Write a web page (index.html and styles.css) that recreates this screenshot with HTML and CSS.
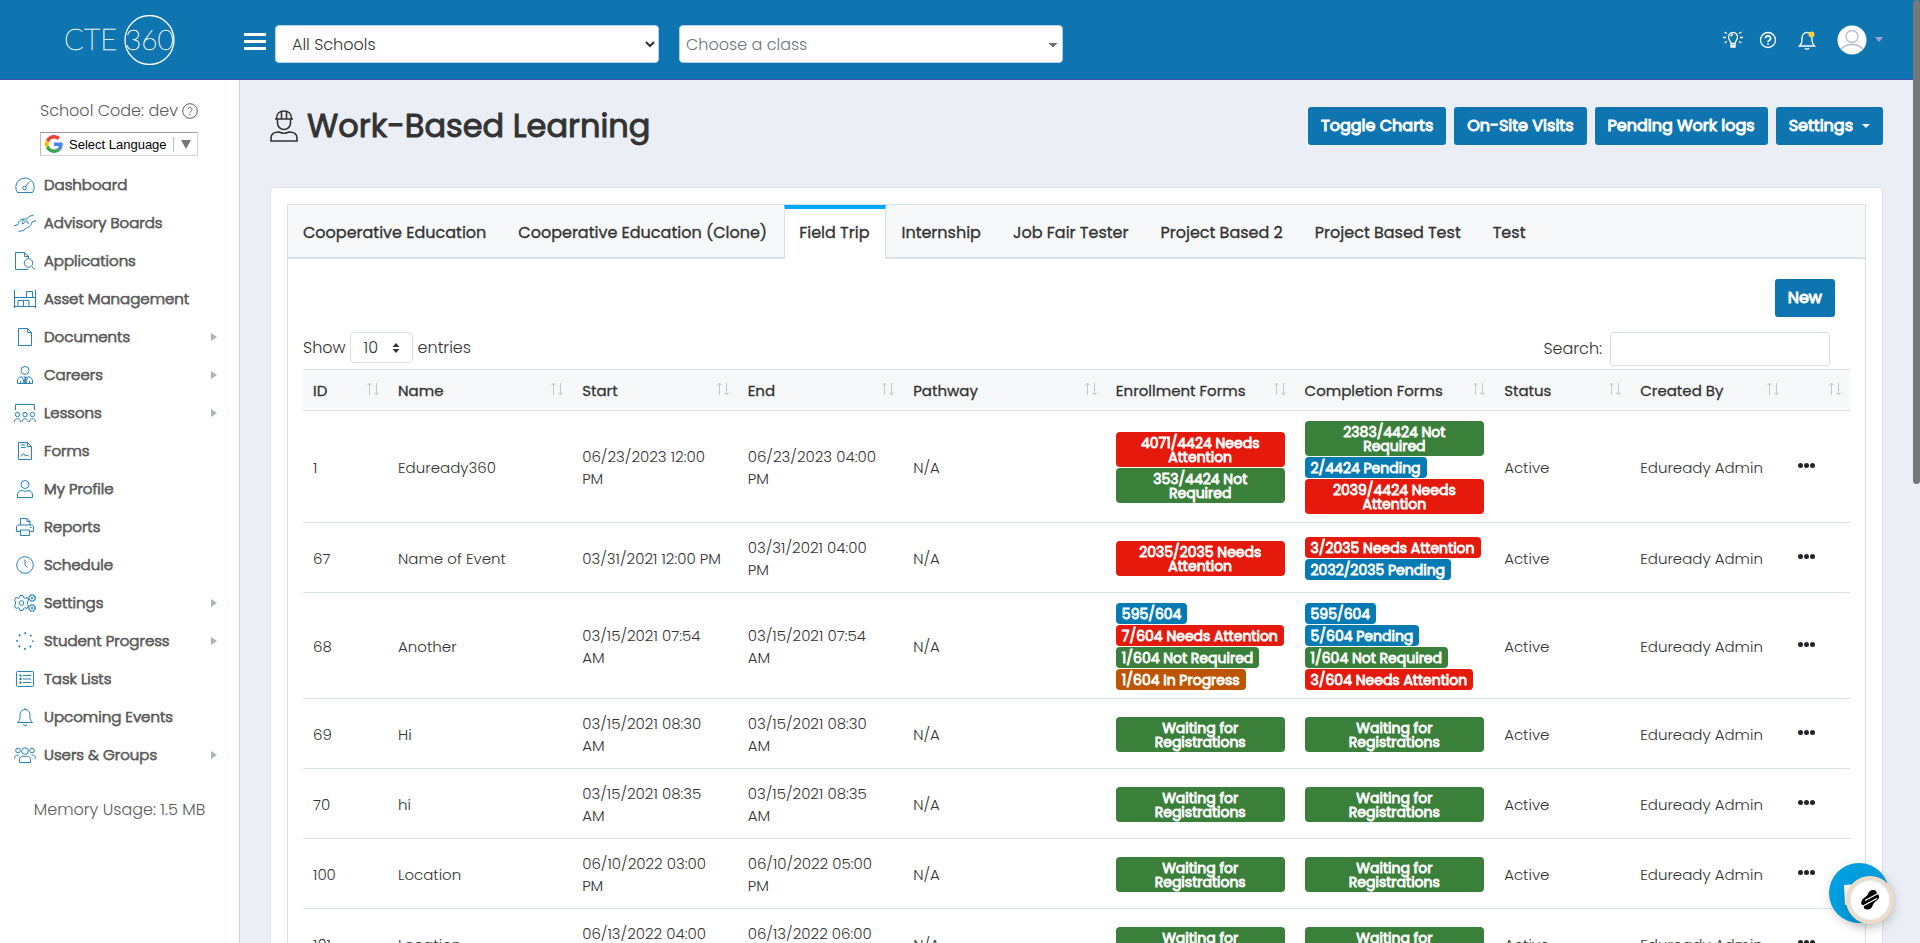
FILE: index.html
```html
<!DOCTYPE html>
<html lang="en">
<head>
    <meta charset="UTF-8">
    <title>Work-Based Learning</title>
    <link rel="stylesheet" href="styles.css">
</head>
<body>

<svg class="defs" width="0" height="0">
    <symbol id="sort" viewBox="0 0 14 14"><path d="M3.5 13V1M1.5 3.5l2-2.5 2 2.5M10.500 1v12M8.500 10.500l2 2.500 2-2.500"/></symbol>
</svg>

<header class="topbar">
    <a href="#" class="brand" aria-label="CTE 360">
        <svg width="112" height="50" viewBox="0 0 112 50">
            <text x="0" y="35" class="brand-text" font-size="29">CTE</text>
            <text x="61" y="35" class="brand-text" font-size="28">360</text>
            <circle cx="85.500" cy="25" r="24.500" fill="none" stroke="#fff" stroke-width="1.3"/>
        </svg>
    </a>
    <button class="hamburger" aria-label="Menu"><span></span><span></span><span></span></button>
    <select class="school-select" aria-label="School"><option>All Schools</option></select>
    <select class="class-select" aria-label="Class"><option>Choose a class</option></select>
    <div class="top-icons">
        <button class="icon-btn" aria-label="Tips">
            <svg width="20" height="18" viewBox="0 0 20 18"><path d="M8 12.500c0-2-2.500-3-2.500-6.500a4.500 4.500 0 0 1 9 0c0 3.500-2.500 4.500-2.500 6.500zM8 12.500V16h4v-3.500M8 14.500h4M8 5.500a2 2 0 0 1 2-2M0 6.500h3M17 6.500h3M1.500 1l2.500 1.500M18.500 1L16 2.500M1.500 12L4 10.500M18.500 12L16 10.500"/></svg>
        </button>
        <button class="icon-btn" aria-label="Help">
            <svg width="18" height="18" viewBox="0 0 18 18"><circle cx="9" cy="9" r="7.500"/><path d="M6.500 7.300a2.500 2.500 0 1 1 3.700 2.200c-.9.500-1.200.8-1.200 1.700M9 12.500v1.200" stroke-width="1.800"/></svg>
        </button>
        <button class="icon-btn bell" aria-label="Notifications">
            <svg width="18" height="20" viewBox="0 0 18 20"><path d="M1.500 16h15c-1.500-1.500-2.500-3-2.500-5.500V8c0-3-2-5.500-5-5.500S4 5 4 8v2.500C4 13 3 14.500 1.500 16zM7 18.200c.8 1.300 3.200 1.300 4 0"/><circle cx="13.500" cy="4.500" r="3" fill="#ffcf3f" stroke="none"/></svg>
        </button>
        <button class="icon-btn avatar" aria-label="Account">
            <svg width="30" height="30" viewBox="0 0 30 30"><circle cx="15" cy="15" r="14.500" fill="#fff" stroke="none"/><circle cx="15" cy="11.500" r="6" stroke="#b5bcc2"/><path d="M4 24c5-6 17-6 22 0" stroke="#b5bcc2"/></svg>
            <span class="caret"></span>
        </button>
    </div>
</header>

<div class="page">
    <aside class="sidebar">
        <div class="school-code">School Code: dev
            <svg width="16" height="16" viewBox="0 0 16 16"><circle cx="8" cy="8" r="7.300"/><path d="M6 6.300a2 2 0 1 1 3 1.900c-.7.400-1 .700-1 1.500M8 11v1.200"/></svg>
        </div>
        <button class="language">
            <svg width="18" height="18" viewBox="0 0 48 48"><path fill="#ea4335" d="M24 9.500c3.500 0 6.700 1.200 9.200 3.600l6.900-6.900C35.900 2.400 30.500 0 24 0 14.600 0 6.500 5.400 2.600 13.200l8 6.200C12.400 13.700 17.700 9.500 24 9.500z"/><path fill="#4285f4" d="M47 24.600c0-1.600-.2-3.100-.4-4.600H24v9h12.900c-.6 3-2.200 5.500-4.700 7.200l7.700 6C44.400 38 47 31.800 47 24.600z"/><path fill="#fbbc05" d="M10.500 28.600a14.500 14.500 0 0 1 0-9.200l-8-6.200a24 24 0 0 0 0 21.600z"/><path fill="#34a853" d="M24 48c6.500 0 11.900-2.100 15.900-5.800l-7.700-6c-2.200 1.500-4.900 2.300-8.200 2.300-6.300 0-11.600-4.200-13.500-9.900l-8 6.200C6.500 42.600 14.600 48 24 48z"/></svg>
            <span class="language-text">Select Language</span>
            <span class="language-caret"></span>
        </button>

        <nav class="menu">
            <a href="#"><svg viewBox="0 0 22 18"><path d="M3.500 16.500a9.200 9.200 0 1 1 15 0zM15.500 5.500l-4 5.200"/><circle cx="10.500" cy="12" r="1.800"/></svg>Dashboard</a>
            <a href="#"><svg viewBox="0 0 22 18"><path d="M0 12l4-1.500c1-4 3-5.500 5.500-5.500M22 6.500l-4 1.500c-1 4-3 5.500-5.500 6L9 16.500l-4.500 1M9.500 5h3.500l2-2.500 4.500-1.500M9.500 5L8 9.500c1.500.5 2.800-.5 3.200-2.500 2-.2 3.300 1 3 3"/></svg>Advisory Boards</a>
            <a href="#"><svg viewBox="0 0 22 18"><path d="M14 17.500H1.500V.5h9l4 4v2M10.500.5v4h4M18 15l3 2.500"/><circle cx="14.500" cy="11" r="4.300"/></svg>Applications</a>
            <a href="#"><svg viewBox="0 0 22 18"><path d="M.5 0v18M21.500 0v18M.5 7.500h21M.5 16.500h21M12.500 7.500v-6h6v6M4 16v-5.500h11V16M9.500 10.500V16"/></svg>Asset Management</a>
            <a href="#"><svg viewBox="0 0 22 18"><path d="M4.500.5h9l4 4v13h-13zM13.500.5v4h4"/></svg>Documents<span class="arrow"></span></a>
            <a href="#"><svg viewBox="0 0 22 18"><circle cx="11" cy="4.500" r="4"/><path d="M3.500 17.500V15c0-2 1.500-3.500 4-4.500l3.500 6.500 3.500-6.500c2.500 1 4 2.500 4 4.500v2.500zM9.500 11h3l-1 3 1 3M11.500 11l-2 6M6.500 15v2.500M15.500 15v2.500"/></svg>Careers<span class="arrow"></span></a>
            <a href="#"><svg viewBox="0 0 22 18"><path d="M1.500 6V.5h19V6M.5 18c0-4.500 6-4.500 6 0M8 18c0-4.500 6-4.500 6 0M15.500 18c0-4.500 6-4.500 6 0"/><circle cx="3.500" cy="10.500" r="2.200"/><circle cx="11" cy="10.500" r="2.200"/><circle cx="18.500" cy="10.500" r="2.200"/></svg>Lessons<span class="arrow"></span></a>
            <a href="#"><svg viewBox="0 0 22 18"><path d="M4.500.5h9l4 4v13h-13zM13.500.5v4h4M7 3h4.500M7 5.500h4.500M7 14.500l2.500-3 2 2.500 2-1 1.500 1.500"/></svg>Forms</a>
            <a href="#"><svg viewBox="0 0 22 18"><circle cx="11" cy="4.500" r="4"/><path d="M3.500 17.500V15c0-3 2-4.500 4.500-4.500 2 1 4 1 6 0 2.500 0 4.500 1.500 4.500 4.500v2.500z"/></svg>My Profile</a>
            <a href="#"><svg viewBox="0 0 22 18"><path d="M6.500 7V.5h6.500l3 3V7M13 .5v3h3M6 13.500H2.500V9c0-1 .5-2 2-2h13c1.500 0 2 1 2 2v4.500H16M6.500 12h9v5.500h-9zM16 9.500h1.500"/></svg>Reports</a>
            <a href="#"><svg viewBox="0 0 22 18"><circle cx="11" cy="9" r="8.300"/><path d="M11 3.500V9l2.500 2.500"/></svg>Schedule</a>
            <a href="#"><svg viewBox="0 0 22 18"><circle cx="7.500" cy="9" r="2.300"/><path d="M6 1.500h3l.5 2 1.500.8 2-.8 1.500 2.500-1 1.500v3l1 1.500-1.500 2.500-2-.8-1.500.8-.5 2H6l-.5-2-1.500-.8-2 .8L.5 12l1-1.500v-3L.5 6 2 3.500l2 .8 1.500-.8z"/><circle cx="18" cy="4" r="1"/><circle cx="18" cy="4" r="3.200" stroke-dasharray="2 .500" stroke-width="1.300"/><circle cx="18" cy="14" r="1"/><circle cx="18" cy="14" r="3.200" stroke-dasharray="2 .500" stroke-width="1.300"/></svg>Settings<span class="arrow"></span></a>
            <a href="#"><svg viewBox="0 0 22 18"><circle cx="11" cy="9" r="7.800" stroke-width="1.800" stroke-dasharray="1.600 4.526" stroke-dashoffset=".8"/></svg>Student Progress<span class="arrow"></span></a>
            <a href="#"><svg viewBox="0 0 22 18"><rect x="2.500" y="1.500" width="17" height="15" rx="1"/><path d="M9 5.500h8M9 9h8M9 12.500h8"/><path d="M5.500 5.500h2M5.500 9h2M5.500 12.500h2" stroke-width="1.800"/></svg>Task Lists</a>
            <a href="#"><svg viewBox="0 0 22 18"><path d="M3.500 14.500h15c-2-1.500-2.500-3-2.500-5.500V7c0-3-2-5.500-5-5.500S6 4 6 7v2c0 2.500-.5 4-2.500 5.500zM9 16.500c.6 1.300 3.400 1.300 4 0M11 0v1.500"/></svg>Upcoming Events</a>
            <a href="#"><svg viewBox="0 0 22 18"><circle cx="11" cy="5" r="3.300"/><path d="M5.500 16.500V14c0-2.500 1.500-3.500 3.500-4 1.500.7 2.500.7 4 0 2 .5 3.500 1.500 3.500 4v2.500zM.5 12.500c0-2.500 1-3.500 4-3.500M21.500 12.500c0-2.500-1-3.500-4-3.500"/><circle cx="4" cy="4.500" r="2.300"/><circle cx="18" cy="4.500" r="2.300"/></svg>Users &amp; Groups<span class="arrow"></span></a>
        </nav>
        <div class="memory">Memory Usage: 1.5 MB</div>
    </aside>

    <main class="content">
        <div class="title-row">
            <svg width="28" height="32" viewBox="0 0 28 32" class="title-icon"><path d="M1 31v-3c0-4 3-6 8-6 3 1.500 7 1.500 10 0 5 0 8 2 8 6v3zM5 9h18M6.500 9c0-5 3-8 7.500-8s7.500 3 7.500 8M7.500 9v4a6.500 6.500 0 0 0 13 0V9M11.500 9V2M16.500 9V2"/></svg>
            <h1>Work-Based Learning</h1>
            <div class="actions">
                <button class="btn">Toggle Charts</button>
                <button class="btn">On-Site Visits</button>
                <button class="btn">Pending Work logs</button>
                <button class="btn">Settings <span class="btn-caret"></span></button>
            </div>
        </div>

        <section class="card">
            <nav class="tabs">
                <a href="#">Cooperative Education</a>
                <a href="#">Cooperative Education (Clone)</a>
                <a href="#" class="active">Field Trip</a>
                <a href="#">Internship</a>
                <a href="#">Job Fair Tester</a>
                <a href="#">Project Based 2</a>
                <a href="#">Project Based Test</a>
                <a href="#">Test</a>
            </nav>
            <div class="tab-content">
                <div class="new-row"><button class="btn">New</button></div>
                <div class="table-tools">
                    <label class="length">Show
                        <span class="length-box">
                            <select><option>10</option></select>
                            <svg width="8" height="12" viewBox="0 0 8 12"><path d="M4 1l3.500 4h-7zM4 11L.5 7h7z"/></svg>
                        </span>
                        entries</label>
                    <label class="search">Search: <input type="text"></label>
                </div>
                <table>
                    <thead>
                        <tr>
                            <th class="col-id"><div>ID<svg><use href="#sort"/></svg></div></th>
                            <th class="col-name"><div>Name<svg><use href="#sort"/></svg></div></th>
                            <th class="col-date"><div>Start<svg><use href="#sort"/></svg></div></th>
                            <th class="col-date"><div>End<svg><use href="#sort"/></svg></div></th>
                            <th class="col-pathway"><div>Pathway<svg><use href="#sort"/></svg></div></th>
                            <th class="col-enroll"><div>Enrollment Forms<svg><use href="#sort"/></svg></div></th>
                            <th class="col-complete"><div>Completion Forms<svg><use href="#sort"/></svg></div></th>
                            <th class="col-status"><div>Status<svg><use href="#sort"/></svg></div></th>
                            <th class="col-created"><div>Created By<svg><use href="#sort"/></svg></div></th>
                            <th class="col-menu"><div><svg><use href="#sort"/></svg></div></th>
                        </tr>
                    </thead>
                    <tbody>
                        <tr>
                            <td>1</td>
                            <td>Eduready360</td>
                            <td>06/23/2023 12:00 PM</td>
                            <td>06/23/2023 04:00 PM</td>
                            <td>N/A</td>
                            <td><div class="badges"><span class="badge red">4071/4424 Needs<br>Attention</span><span class="badge green">353/4424 Not<br>Required</span></div></td>
                            <td><div class="badges"><span class="badge green">2383/4424 Not<br>Required</span><span class="badge blue">2/4424 Pending</span><span class="badge red">2039/4424 Needs<br>Attention</span></div></td>
                            <td>Active</td>
                            <td>Eduready Admin</td>
                            <td><button class="dots" aria-label="Actions"><i></i><i></i><i></i></button></td>
                        </tr>
                        <tr>
                            <td>67</td>
                            <td>Name of Event</td>
                            <td>03/31/2021 12:00 PM</td>
                            <td>03/31/2021 04:00<br>PM</td>
                            <td>N/A</td>
                            <td><div class="badges"><span class="badge red">2035/2035 Needs<br>Attention</span></div></td>
                            <td><div class="badges"><span class="badge red">3/2035 Needs Attention</span><span class="badge blue">2032/2035 Pending</span></div></td>
                            <td>Active</td>
                            <td>Eduready Admin</td>
                            <td><button class="dots" aria-label="Actions"><i></i><i></i><i></i></button></td>
                        </tr>
                        <tr>
                            <td>68</td>
                            <td>Another</td>
                            <td>03/15/2021 07:54<br>AM</td>
                            <td>03/15/2021 07:54<br>AM</td>
                            <td>N/A</td>
                            <td><div class="badges"><span class="badge blue">595/604</span><span class="badge red">7/604 Needs Attention</span><span class="badge green">1/604 Not Required</span><span class="badge orange">1/604 In Progress</span></div></td>
                            <td><div class="badges"><span class="badge blue">595/604</span><span class="badge blue">5/604 Pending</span><span class="badge green">1/604 Not Required</span><span class="badge red">3/604 Needs Attention</span></div></td>
                            <td>Active</td>
                            <td>Eduready Admin</td>
                            <td><button class="dots" aria-label="Actions"><i></i><i></i><i></i></button></td>
                        </tr>
                        <tr>
                            <td>69</td>
                            <td>Hi</td>
                            <td>03/15/2021 08:30<br>AM</td>
                            <td>03/15/2021 08:30<br>AM</td>
                            <td>N/A</td>
                            <td><div class="badges"><span class="badge green">Waiting for<br>Registrations</span></div></td>
                            <td><div class="badges"><span class="badge green">Waiting for<br>Registrations</span></div></td>
                            <td>Active</td>
                            <td>Eduready Admin</td>
                            <td><button class="dots" aria-label="Actions"><i></i><i></i><i></i></button></td>
                        </tr>
                        <tr>
                            <td>70</td>
                            <td>hi</td>
                            <td>03/15/2021 08:35<br>AM</td>
                            <td>03/15/2021 08:35<br>AM</td>
                            <td>N/A</td>
                            <td><div class="badges"><span class="badge green">Waiting for<br>Registrations</span></div></td>
                            <td><div class="badges"><span class="badge green">Waiting for<br>Registrations</span></div></td>
                            <td>Active</td>
                            <td>Eduready Admin</td>
                            <td><button class="dots" aria-label="Actions"><i></i><i></i><i></i></button></td>
                        </tr>
                        <tr>
                            <td>100</td>
                            <td>Location</td>
                            <td>06/10/2022 03:00<br>PM</td>
                            <td>06/10/2022 05:00<br>PM</td>
                            <td>N/A</td>
                            <td><div class="badges"><span class="badge green">Waiting for<br>Registrations</span></div></td>
                            <td><div class="badges"><span class="badge green">Waiting for<br>Registrations</span></div></td>
                            <td>Active</td>
                            <td>Eduready Admin</td>
                            <td><button class="dots" aria-label="Actions"><i></i><i></i><i></i></button></td>
                        </tr>
                        <tr>
                            <td>101</td>
                            <td>Location</td>
                            <td>06/13/2022 04:00<br>PM</td>
                            <td>06/13/2022 06:00<br>PM</td>
                            <td>N/A</td>
                            <td><div class="badges"><span class="badge green">Waiting for<br>Registrations</span></div></td>
                            <td><div class="badges"><span class="badge green">Waiting for<br>Registrations</span></div></td>
                            <td>Active</td>
                            <td>Eduready Admin</td>
                            <td><button class="dots" aria-label="Actions"><i></i><i></i><i></i></button></td>
                        </tr>
                    </tbody>
                </table>
            </div>
        </section>
    </main>
</div>

<button class="chat" aria-label="Chat"><svg width="60" height="60" viewBox="0 0 60 60"><path d="M15 22l30-2v22H16z" fill="#fff"/></svg></button>
<button class="widget" aria-label="Assistant">
    <svg width="22" height="22" viewBox="0 0 22 22"><path d="M9 5C10 1.500 13 .6 15.500 1.200c2 .5 2.500 2 2.200 3.500 2.500.5 3 2.800 1.500 5.300-1.500 2.200-4.500 3-5.200 5.500-.8 3.500-3 5.500-6.500 5-2.500-.4-3-2-2.700-3.800-2.500-.5-3.300-3-1.800-5.500C4.500 8.500 8 8 9 5z"/><path d="M6 11.500l13-7M3 17.500l15-8" stroke="#fff" stroke-width="1.300"/></svg>
</button>
<div class="scroll-thumb"></div>

</body>
</html>
```

FILE: styles.css
```css
* {
    box-sizing: border-box;
}
body {
    margin: 0;
    height: 100vh;
    overflow: hidden;
    font-family: Poppins, Inter, sans-serif;
    font-size: 15px;
    font-weight: 300;
    line-height: 22px;
    color: #333;
    background: #ebeef4;
    padding-right: 7px;
}
a {
    text-decoration: none;
    color: inherit;
}
button, select, input {
    font: inherit;
    color: inherit;
}
button {
    border: 0;
    padding: 0;
    background: none;
    cursor: pointer;
}
svg {
    fill: none;
    stroke: currentColor;
    flex: none;
}
.defs {
    display: block;
}

/* top bar */
.topbar {
    display: flex;
    align-items: center;
    height: 80px;
    margin-right: -7px;
    padding-right: 37px;
    background: #0f75b1;
    border-bottom: 1px solid #3f51b5;
    color: #fff;
}
.brand {
    width: 244px;
    padding-left: 64px;
}
.brand svg {
    display: block;
}
.brand-text {
    fill: #fff;
    stroke: #fff;
    stroke-width: 0.4;
    font-family: Lato, sans-serif;
    font-weight: 100;
}
.hamburger {
    display: flex;
    flex-direction: column;
    gap: 4px;
    width: 22px;
    margin: 3px 9px 0 0;
}
.hamburger span {
    height: 3px;
    background: #fff;
}
.school-select, .class-select {
    width: 384px;
    height: 38px;
    margin: 8px 20px 0 0;
    border: 1px solid #b5d0e2;
    border-radius: 4px;
    background: #fff;
    color: #333;
    font-size: 16px;
}
.school-select {
    padding: 2px 0 0 12px;
}
.class-select {
    appearance: none;
    padding: 3px 0 0 6px;
    color: #6c757d;
    background: linear-gradient(to bottom right, #6c757d 50%, transparent 51%) calc(100% - 5px) 17px / 4px 4px no-repeat,
        linear-gradient(to bottom left, #6c757d 50%, transparent 51%) calc(100% - 9px) 17px / 4px 4px no-repeat, #fff;
}
.top-icons {
    display: flex;
    align-items: center;
    margin-left: auto;
}
.icon-btn {
    display: flex;
    align-items: center;
}
.icon-btn svg {
    stroke-width: 1.3;
}
.icon-btn + .icon-btn {
    margin-left: 16px;
}
.icon-btn + .bell, .icon-btn + .avatar {
    margin-left: 21px;
}
.caret {
    margin-left: 8px;
    border: 4px solid transparent;
    border-top: 5px solid #a3a3d6;
    border-bottom: 0;
}

/* sidebar */
.page {
    display: flex;
    align-items: stretch;
    min-height: calc(100vh - 80px);
}
.sidebar {
    flex: none;
    width: 240px;
    background: #fff;
    border-right: 1px solid #c8d3df;
    color: #5c5c5c;
}
.school-code {
    display: flex;
    align-items: center;
    gap: 4px;
    margin: 20px 0 10px 40px;
    font-size: 16px;
}
.language {
    display: flex;
    align-items: center;
    width: 158px;
    height: 24px;
    margin-left: 40px;
    padding: 0 6px 0 4px;
    border: 1px solid #d5d5d5;
    border-top-color: #9b9b9b;
    border-left-color: #bdbdbd;
    font: 13px "Liberation Sans", sans-serif;
    color: #000;
}
.language svg {
    stroke: none;
    margin-right: 6px;
}
.language-text {
    flex: 1;
    border-right: 1px solid #bbb;
    text-align: left;
    white-space: nowrap;
}
.language-caret {
    margin-left: 7px;
    border: 5px solid transparent;
    border-top: 9px solid #767676;
    border-bottom: 0;
}
.menu {
    margin-top: 10px;
}
.menu a {
    display: flex;
    align-items: center;
    height: 38px;
    padding: 0 22px 0 14px;
    -webkit-text-stroke: 0.05em;
}
.menu svg {
    width: 22px;
    height: 18px;
    margin-right: 8px;
    color: #0f75b1;
    stroke-width: 0.9;
}
.arrow {
    margin-left: auto;
    border: 4px solid transparent;
    border-left: 6px solid #a9b7be;
    border-right: 0;
}
.memory {
    margin-top: 25px;
    text-align: center;
    font-size: 16px;
}

/* content */
.content {
    flex: 1;
    min-width: 0;
    padding: 26px 30px 0 30px;
}
.title-row {
    display: flex;
    align-items: center;
    height: 40px;
    margin-bottom: 41px;
}
.title-icon {
    stroke-width: 1.6;
    margin-right: 9px;
}
h1 {
    margin: 0;
    font-size: 32px;
    font-weight: 400;
    line-height: 40px;
    -webkit-text-stroke: 0.03em;
}
.actions {
    display: flex;
    gap: 8px;
    margin-left: auto;
}
.btn {
    display: flex;
    align-items: center;
    height: 38px;
    padding: 0 13px;
    border-radius: 3px;
    background: #0f75b1;
    color: #fff;
    font-size: 16px;
    font-weight: 400;
    -webkit-text-stroke: 0.06em;
}
.btn-caret {
    margin-left: 9px;
    border: 4px solid transparent;
    border-top: 4px solid #fff;
    border-bottom: 0;
}
.card {
    padding: 16px;
    background: #fff;
    border: 1px solid #dae1e7;
    border-radius: 4px;
}
.tabs {
    display: flex;
    height: 55px;
    border: 1px solid #d8e1e7;
    border-bottom-width: 2px;
    background: #f6f8fa;
}
.tabs a {
    display: flex;
    align-items: center;
    padding: 3px 17px 0 15px;
    font-size: 16px;
    font-weight: 400;
    -webkit-text-stroke: 0.02em;
}
.tabs .active {
    margin-bottom: -2px;
    padding: 0 16px 3px 14px;
    border: 1px solid #d8e1e7;
    border-top: 4px solid #00a8ff;
    border-bottom: 0;
    background: #fff;
}
.tab-content {
    padding: 20px 15px;
    border: 1px solid #d8e1e7;
    border-top: 0;
}
.new-row {
    display: flex;
    justify-content: flex-end;
    padding-right: 15px;
    margin-bottom: 15px;
}
.table-tools {
    display: flex;
    justify-content: space-between;
    align-items: flex-start;
    height: 37px;
    padding-right: 20px;
    font-size: 16px;
}
.length, .search {
    display: flex;
    align-items: center;
}
.length-box {
    position: relative;
    margin: 0 5px 0 4px;
}
.length-box select {
    display: block;
    appearance: none;
    width: 63px;
    height: 31px;
    padding: 1px 13px 0;
    border: 1px solid #d8e1ec;
    border-radius: 4px;
    background: #fff;
}
.length-box svg {
    position: absolute;
    right: 13px;
    top: 10px;
    stroke: none;
    fill: #333;
}
.search input {
    width: 220px;
    height: 34px;
    margin-left: 8px;
    border: 1px solid #d8e1ec;
    border-radius: 3px;
}

/* table */
table {
    width: 100%;
    table-layout: fixed;
    border-collapse: collapse;
}
th {
    height: 41px;
    padding: 2px 8px 0 10px;
    background: #f6f8fa;
    border-top: 1px solid #d8e2e7;
    border-bottom: 1px solid #d8e2e7;
    text-align: left;
    font-weight: 400;
    white-space: nowrap;
    -webkit-text-stroke: 0.02em;
}
th div {
    display: flex;
    align-items: center;
}
th svg {
    width: 14px;
    height: 14px;
    margin: 0 0 4px auto;
    color: #c4c8cb;
}
td {
    height: 70px;
    padding: 10px 10px 8px;
    border-bottom: 1px solid #d8e2e7;
    vertical-align: middle;
}
.col-id { width: 5.5%; }
.col-name { width: 11.9%; }
.col-date { width: 10.7%; }
.col-pathway { width: 13.1%; }
.col-enroll { width: 12.2%; }
.col-complete { width: 12.9%; }
.col-status { width: 8.8%; }
.col-created { width: 10.2%; }
.col-menu { width: 4%; }

.badges {
    display: flex;
    flex-direction: column;
    align-items: flex-start;
    gap: 1px;
}
.badge {
    padding: 4px 6px 3px;
    border-radius: 4px;
    color: #fff;
    font-size: 14px;
    font-weight: 400;
    line-height: 14px;
    text-align: center;
    white-space: nowrap;
    -webkit-text-stroke: 0.06em;
}
.badge:has(br) {
    align-self: stretch;
}
.red { background: #e51a0c; }
.green { background: #3a803b; }
.blue { background: #067ab3; }
.orange { background: #bd5500; }

.dots {
    display: flex;
    gap: 1px;
    margin-bottom: 4px;
}
.dots i {
    width: 5px;
    height: 5px;
    border-radius: 50%;
    background: #212529;
}

/* floating widgets */
.chat, .widget {
    position: fixed;
    display: flex;
    align-items: center;
    justify-content: center;
    border-radius: 50%;
}
.chat {
    right: 31px;
    bottom: 20px;
    width: 60px;
    height: 60px;
    background: #009fe0;
    box-shadow: 0 3px 10px rgba(0, 0, 0, 0.15);
}
.chat svg {
    stroke: none;
}
.widget {
    right: 26px;
    bottom: 19px;
    width: 48px;
    height: 48px;
    border: 3px solid #eedcc6;
    background: #fff;
    box-shadow: 0 4px 12px rgba(0, 0, 0, 0.2), inset 0 0 3px rgba(0, 0, 0, 0.4);
}
.widget svg {
    fill: #000;
    stroke: none;
}
.scroll-thumb {
    position: fixed;
    top: 0;
    right: 0;
    width: 7px;
    height: 484px;
    border-radius: 4px;
    background: #75777a;
}
```
